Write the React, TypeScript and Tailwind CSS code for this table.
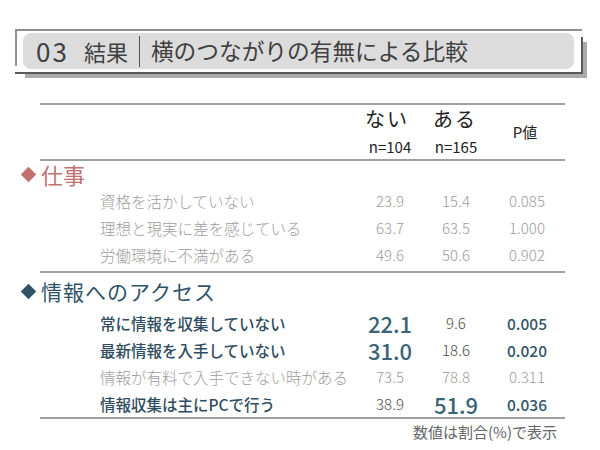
import React from "react";

const F = "font-['Noto_Sans_CJK_JP','Noto_Sans',sans-serif]";

type Row = {
  label: string;
  a: string;
  b: string;
  p: string;
  style: "gray" | "bold";
  big?: "a" | "b";
};

const work: Row[] = [
  { label: "資格を活かしていない", a: "23.9", b: "15.4", p: "0.085", style: "gray" },
  { label: "理想と現実に差を感じている", a: "63.7", b: "63.5", p: "1.000", style: "gray" },
  { label: "労働環境に不満がある", a: "49.6", b: "50.6", p: "0.902", style: "gray" },
];

const info: Row[] = [
  { label: "常に情報を収集していない", a: "22.1", b: "9.6", p: "0.005", style: "bold", big: "a" },
  { label: "最新情報を入手していない", a: "31.0", b: "18.6", p: "0.020", style: "bold", big: "a" },
  { label: "情報が有料で入手できない時がある", a: "73.5", b: "78.8", p: "0.311", style: "gray" },
  { label: "情報収集は主にPCで行う", a: "38.9", b: "51.9", p: "0.036", style: "bold", big: "b" },
];

const cols = "grid grid-cols-[337px_66px_66px_76px]";

function Num({ v, big, bold }: { v: string; big: boolean; bold: boolean }) {
  if (big)
    return <div className="text-center text-[22px] font-medium text-[#3a6478] leading-[22px]">{v}</div>;
  if (bold)
    return <div className="text-center text-[15px] font-light text-[#4a4a4a] leading-[22px]">{v}</div>;
  return <div className="text-center text-[15px] font-light text-[#9c9c9c] leading-[22px]">{v}</div>;
}

function DataRow({ r }: { r: Row }) {
  const bold = r.style === "bold";
  return (
    <div className={`${cols} h-[27px] items-center`}>
      <div
        className={
          bold
            ? "pl-[80px] text-[15.5px] font-medium text-[#2f4d60] leading-[22px] whitespace-nowrap"
            : "pl-[80px] text-[15.5px] font-light text-[#9e9e9e] leading-[22px] whitespace-nowrap"
        }
      >
        {r.label}
      </div>
      <Num v={r.a} big={r.big === "a"} bold={bold} />
      <Num v={r.b} big={r.big === "b"} bold={bold} />
      <div
        className={
          bold
            ? "text-center text-[15.5px] font-medium text-[#2f5468] leading-[22px]"
            : "text-center text-[15px] font-light text-[#9c9c9c] leading-[22px]"
        }
      >
        {r.p}
      </div>
    </div>
  );
}

export default function App() {
  return (
    <div className={`w-[600px] h-[450px] bg-white flex flex-col ${F}`}>
      {/* Title frame */}
      <div className="pt-[29px] pl-[15px]">
        <div className="relative w-[572px] h-[49px]">
          <span className="absolute left-0 top-0 w-[567px] h-[2px] bg-[#8f8f8f]" />
          <span className="absolute left-0 top-0 w-[2px] h-[37px] bg-[#8f8f8f]" />
          <span className="absolute left-[10px] top-[45px] w-[562px] h-[4px] bg-[#ababab]" />
          <span className="absolute left-[568px] top-[13px] w-[4px] h-[36px] bg-[#ababab]" />
          <span className="absolute left-0 top-[43px] w-[568px] h-[2px] bg-[#5a5a5a]" />
          <span className="absolute left-[566px] top-[8px] w-[2px] h-[37px] bg-[#5a5a5a]" />
          <div className="absolute left-[8px] top-[4px] w-[551px] h-[36px] rounded-[8px] bg-[#dcdcdc] flex items-center pl-[13px] text-[#404040]">
            <span className="text-[26px] tracking-[2px] leading-none">03</span>
            <span className="ml-[15px] text-[22px] leading-none">結果</span>
            <span className="ml-[11px] w-[1px] h-[31px] bg-[#555555]" />
            <span className="ml-[11px] text-[22.7px] leading-none whitespace-nowrap">
              横のつながりの有無による比較
            </span>
          </div>
        </div>
      </div>

      {/* Table */}
      <div className="mt-[25px] ml-[20px] w-[545px] flex flex-col">
        <div className="ml-[20px] h-[2px] bg-[#a0a0a0]" />
        <div className={`${cols} h-[54px] items-center`}>
          <div />
          <div className="flex flex-col items-center text-[#222222]">
            <div className="text-[20px] leading-[24px] tracking-[2px] -translate-x-[3px]">ない</div>
            <div className="mt-[6px] text-[15px] leading-[20px]">n=104</div>
          </div>
          <div className="flex flex-col items-center text-[#222222]">
            <div className="text-[20px] leading-[24px] tracking-[2px] -translate-x-[1px]">ある</div>
            <div className="mt-[6px] text-[15px] leading-[20px]">n=165</div>
          </div>
          <div className="text-center text-[15px] text-[#222222] -translate-x-[2px]">P値</div>
        </div>
        <div className="ml-[20px] h-[2px] bg-[#a0a0a0]" />

        <div className="h-[26px] flex items-center">
          <div className="ml-[3px] w-[11px] h-[11px] rotate-45 bg-[#c07270]" />
          <span className="ml-[7px] text-[22px] leading-none text-[#c07270]">仕事</span>
        </div>
        {work.map((r) => (
          <DataRow key={r.label} r={r} />
        ))}
        <div className="mt-[3px] ml-[20px] h-[2px] bg-[#a0a0a0]" />

        <div className="h-[36px] flex items-center">
          <div className="ml-[3px] w-[11px] h-[11px] rotate-45 bg-[#2f5468]" />
          <span className="ml-[7px] text-[21px] leading-none text-[#2f5468] tracking-[1px]">
            情報へのアクセス
          </span>
        </div>
        {info.map((r) => (
          <DataRow key={r.label} r={r} />
        ))}
        <div className="ml-[20px] h-[2px] bg-[#a0a0a0]" />
        <div className="pr-[8px] text-right text-[15px] leading-[26px] text-[#666666]">
          数値は割合(%)で表示
        </div>
      </div>
    </div>
  );
}
